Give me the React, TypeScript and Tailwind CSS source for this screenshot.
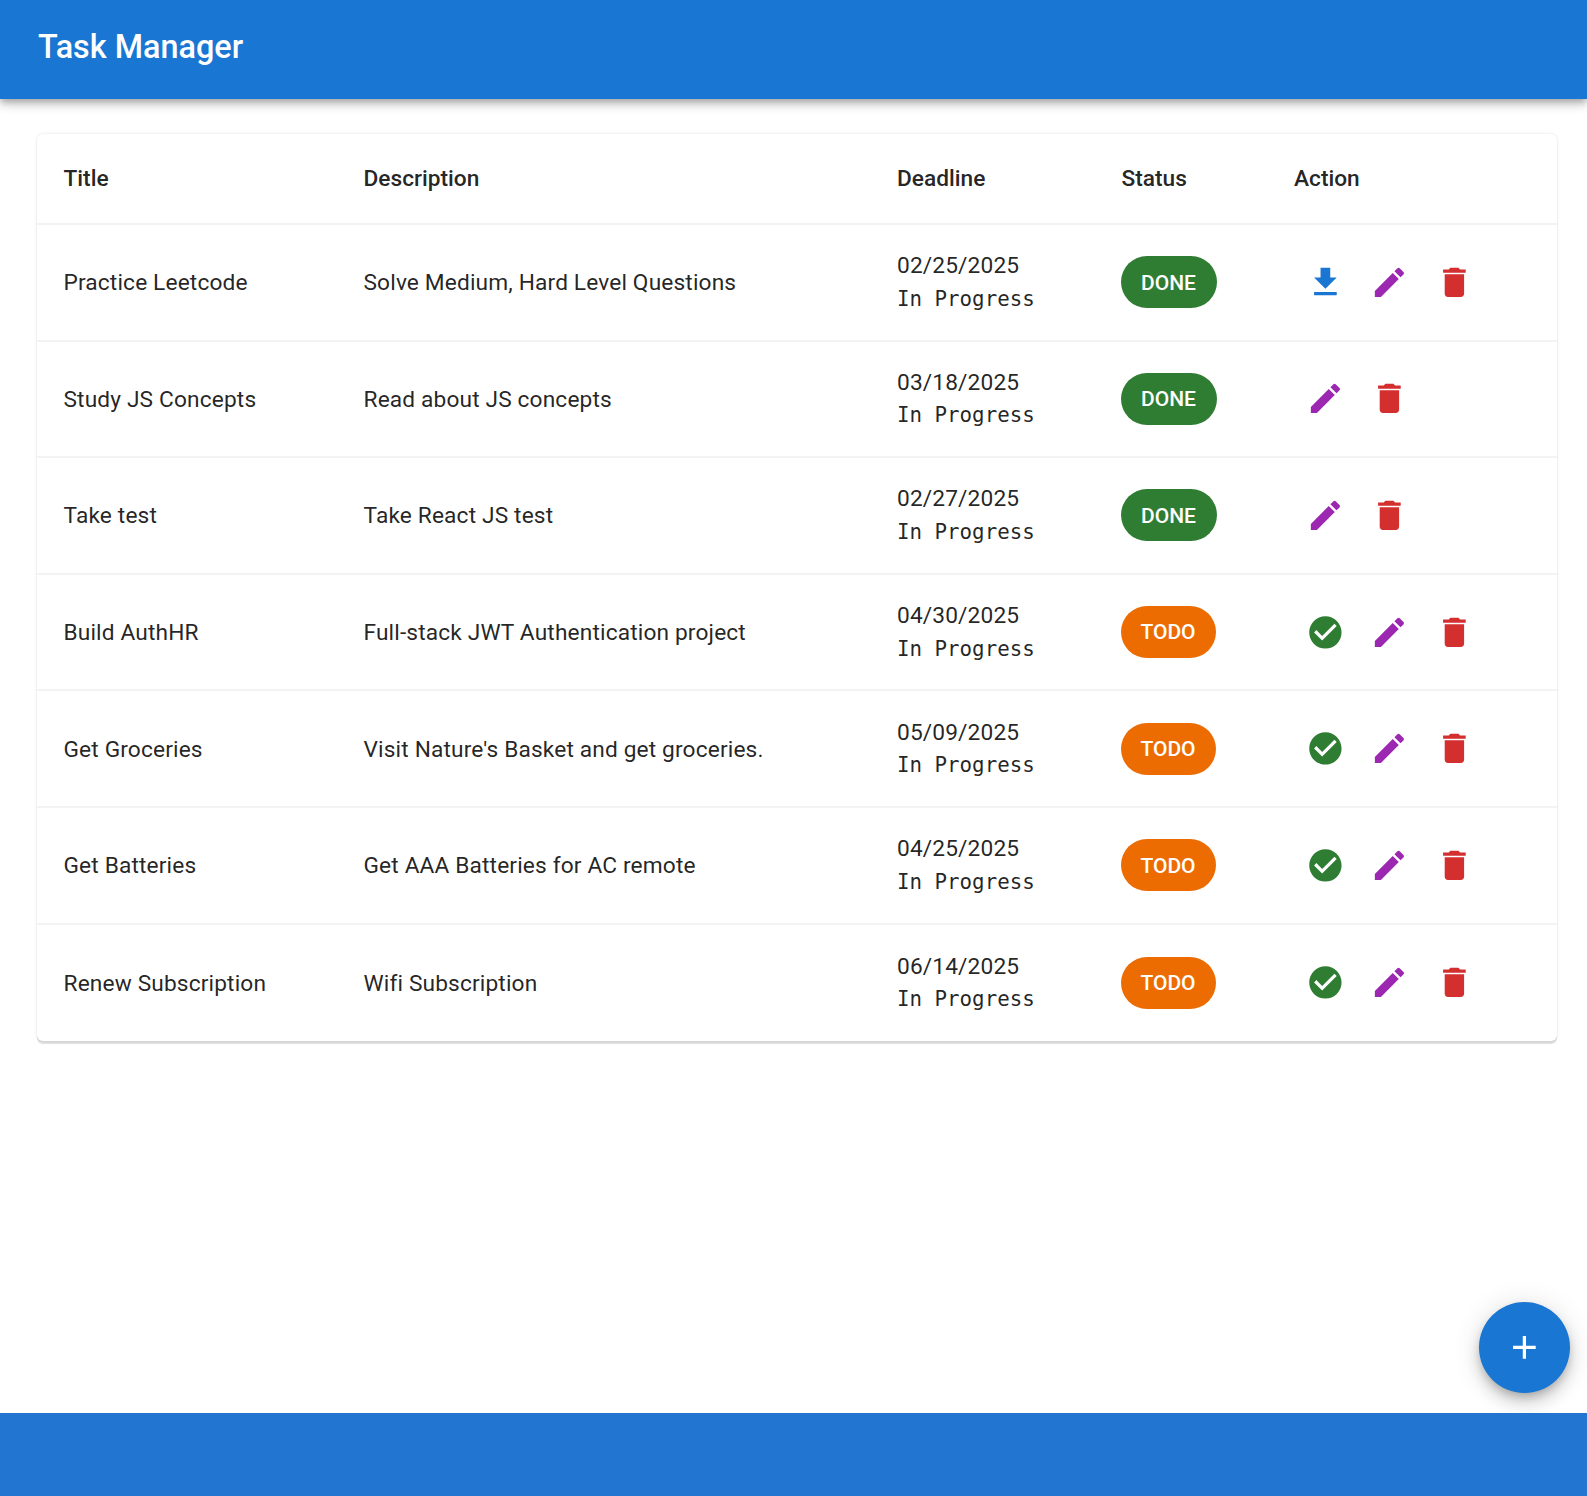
type Action = "download" | "check" | "edit" | "delete";

const ICONS: Record<Action, { path: string; color: string; label: string }> = {
  download: {
    path: "M5 20h14v-2H5zM19 9h-4V3H9v6H5l7 7z",
    color: "text-[#1976d2]",
    label: "Download",
  },
  check: {
    path: "M12 2C6.48 2 2 6.48 2 12s4.48 10 10 10 10-4.48 10-10S17.52 2 12 2m-2 15-5-5 1.41-1.41L10 14.17l7.59-7.59L19 8z",
    color: "text-[#2e7d32]",
    label: "Complete",
  },
  edit: {
    path: "M3 17.25V21h3.75L17.81 9.94l-3.75-3.75zM20.71 7.04c.39-.39.39-1.02 0-1.41l-2.34-2.34a.996.996 0 0 0-1.41 0l-1.83 1.83 3.75 3.75z",
    color: "text-[#9c27b0]",
    label: "Edit",
  },
  delete: {
    path: "M6 19c0 1.1.9 2 2 2h8c1.1 0 2-.9 2-2V7H6zM19 4h-3.5l-1-1h-5l-1 1H5v2h14z",
    color: "text-[#d32f2f]",
    label: "Delete",
  },
};

type Task = {
  title: string;
  description: string;
  deadline: string;
  done: boolean;
  actions: Action[];
};

const TASKS: Task[] = [
  { title: "Practice Leetcode", description: "Solve Medium, Hard Level Questions", deadline: "02/25/2025", done: true, actions: ["download", "edit", "delete"] },
  { title: "Study JS Concepts", description: "Read about JS concepts", deadline: "03/18/2025", done: true, actions: ["edit", "delete"] },
  { title: "Take test", description: "Take React JS test", deadline: "02/27/2025", done: true, actions: ["edit", "delete"] },
  { title: "Build AuthHR", description: "Full-stack JWT Authentication project", deadline: "04/30/2025", done: false, actions: ["check", "edit", "delete"] },
  { title: "Get Groceries", description: "Visit Nature's Basket and get groceries.", deadline: "05/09/2025", done: false, actions: ["check", "edit", "delete"] },
  { title: "Get Batteries", description: "Get AAA Batteries for AC remote", deadline: "04/25/2025", done: false, actions: ["check", "edit", "delete"] },
  { title: "Renew Subscription", description: "Wifi Subscription", deadline: "06/14/2025", done: false, actions: ["check", "edit", "delete"] },
];

const COLS = "grid grid-cols-[300px_533.5px_224.5px_172.5px_1fr] items-center";

function ActionButton({ kind }: { kind: Action }) {
  const icon = ICONS[kind];
  return (
    <button aria-label={icon.label} className={`p-[12.9px] ${icon.color}`}>
      <svg viewBox="0 0 24 24" className="size-[38.8px]" fill="currentColor">
        <path d={icon.path} />
      </svg>
    </button>
  );
}

function StatusChip({ done }: { done: boolean }) {
  return (
    <span
      className={`inline-flex h-[52px] items-center justify-center rounded-full pt-0.5 text-[21px] font-medium text-white ${
        done ? "w-[96px] bg-[#2e7d32]" : "w-[95px] bg-[#ed6c02]"
      }`}
    >
      {done ? "DONE" : "TODO"}
    </span>
  );
}

function TaskRow({ task }: { task: Task }) {
  return (
    <div className={`${COLS} h-[116.6px] border-b-2 border-[#f3f3f3] tracking-[0.15px] last:border-b-0`}>
      <div className="pt-0.5 pl-[26.5px]">{task.title}</div>
      <div className="pt-0.5 pl-[26.5px]">{task.description}</div>
      <div className="flex flex-col pt-px pl-[26.5px] leading-[32.5px]">
        <span>{task.deadline}</span>
        <span className="font-['DejaVu_Sans_Mono',monospace] text-[20.8px] tracking-normal">In Progress</span>
      </div>
      <div className="flex pl-[25.5px] tracking-normal">
        <StatusChip done={task.done} />
      </div>
      <div className="flex pl-[25.5px]">
        {task.actions.map((a) => (
          <ActionButton key={a} kind={a} />
        ))}
      </div>
    </div>
  );
}

export default function App() {
  return (
    <div className="flex h-[1496px] w-[1587px] flex-col overflow-hidden bg-white font-['Roboto',sans-serif] text-[22.7px] text-black/87">
      <header className="z-10 flex h-[98.5px] shrink-0 items-center bg-[#1976d2] pb-1 pl-[38px] text-white shadow-[0_3px_6px_-1px_rgba(0,0,0,0.2),0_6px_8px_0_rgba(0,0,0,0.14),0_2px_16px_0_rgba(0,0,0,0.12)]">
        <h1 className="text-[32.4px] font-medium">Task Manager</h1>
      </header>

      <main className="relative flex-1 overflow-hidden pt-[35.5px] pr-[30px] pl-[37px]">
        <div className="overflow-hidden rounded-[6px] bg-white shadow-[0_3px_1px_0_rgba(0,0,0,0.13),0_0_3px_0_rgba(0,0,0,0.12)]">
          <div className={`${COLS} h-[91px] border-b-2 border-[#f3f3f3] font-medium`}>
            <div className="pt-0.5 pl-[26.5px]">Title</div>
            <div className="pt-0.5 pl-[26.5px]">Description</div>
            <div className="pt-0.5 pl-[26.5px]">Deadline</div>
            <div className="pt-0.5 pl-[26.5px]">Status</div>
            <div className="pt-0.5 pl-[26.5px]">Action</div>
          </div>
          {TASKS.map((t) => (
            <TaskRow key={t.title} task={t} />
          ))}
        </div>

        <button
          aria-label="Add task"
          className="absolute right-[17px] bottom-[20px] flex size-[91px] items-center justify-center rounded-full bg-[#1976d2] text-white shadow-[0_5px_8px_-2px_rgba(0,0,0,0.2),0_10px_16px_0_rgba(0,0,0,0.14),0_2px_29px_0_rgba(0,0,0,0.12)]"
        >
          <svg viewBox="0 0 24 24" className="size-[38.8px]" fill="currentColor">
            <path d="M19 13h-6v6h-2v-6H5v-2h6V5h2v6h6z" />
          </svg>
        </button>
      </main>

      <footer className="h-[83px] shrink-0 bg-[#2275d1]" />
    </div>
  );
}
